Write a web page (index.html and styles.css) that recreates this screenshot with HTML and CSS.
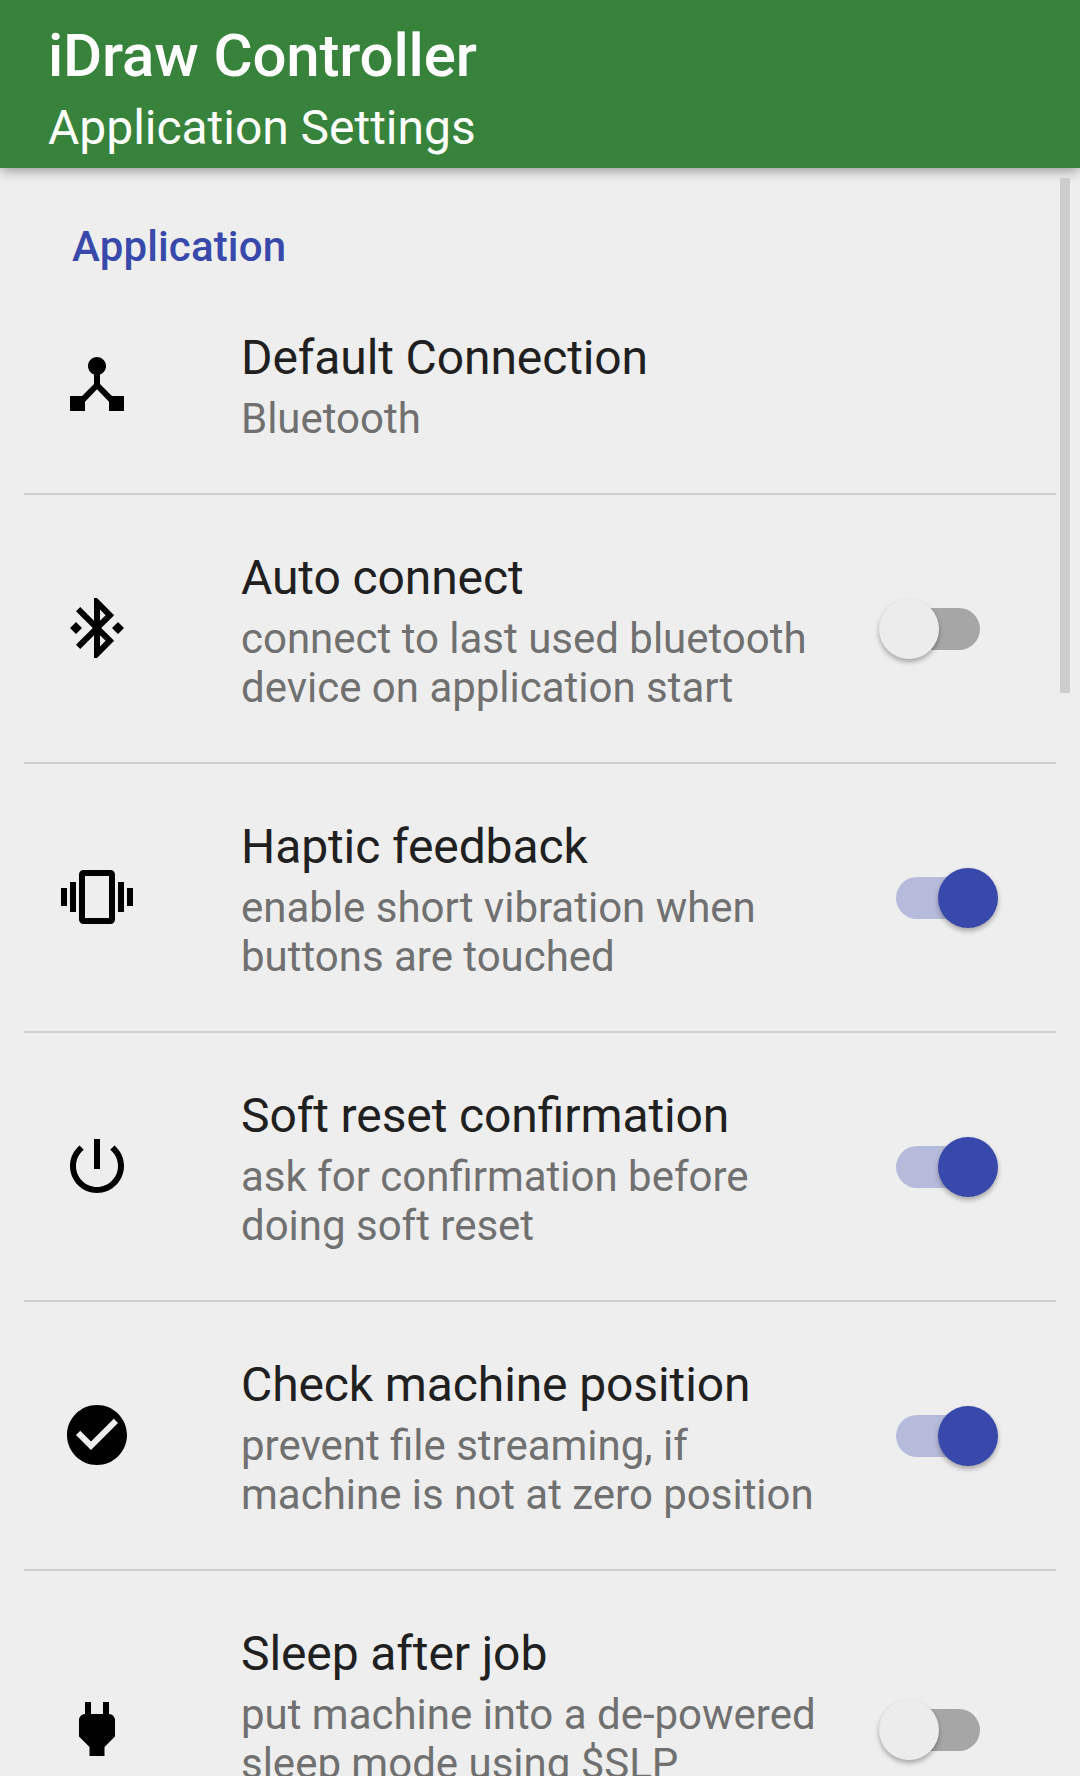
FILE: index.html
```html
<!DOCTYPE html>
<html lang="en">
<head>
<meta charset="utf-8">
<title>iDraw Controller</title>
<link rel="stylesheet" href="styles.css">
</head>
<body>
<header class="app-bar">
  <h1 class="app-title">iDraw Controller</h1>
  <p class="app-subtitle">Application Settings</p>
</header>
<main class="settings">
  <h2 class="category">Application</h2>
  <section class="row row-first">
    <svg class="icon" viewBox="0 0 24 24"><path d="M17 16l-4-4V8.820C14.160 8.400 15 7.300 15 6c0-1.660-1.340-3-3-3S9 4.340 9 6c0 1.300.840 2.400 2 2.820V12l-4 4H3v5h5v-3.050l4-4.200 4 4.200V21h5v-5h-4z"/></svg>
    <div class="text"><h3 class="title">Default Connection</h3><p class="summary">Bluetooth</p></div>
  </section>
  <section class="row">
    <svg class="icon" viewBox="0 0 24 24"><path d="M7 12l-2-2-2 2 2 2 2-2zm10.710-4.290L12 2h-1v7.590L6.410 5 5 6.410 10.590 12 5 17.590 6.410 19 11 14.410V22h1l5.710-5.710-4.300-4.290 4.300-4.290zM13 5.830l1.880 1.880L13 9.590V5.830zm1.880 10.460L13 18.170v-3.760l1.880 1.880zM19 10l-2 2 2 2 2-2-2-2z"/></svg>
    <div class="text"><h3 class="title">Auto connect</h3><p class="summary">connect to last used bluetooth<br>device on application start</p></div>
    <span class="switch"></span>
  </section>
  <section class="row">
    <svg class="icon" viewBox="0 0 24 24"><path d="M0 15h2V9H0v6zm3 2h2V7H3v10zm19-8v6h2V9h-2zm-3 8h2V7h-2v10zM16.500 3h-9C6.670 3 6 3.670 6 4.500v15c0 .830.670 1.500 1.500 1.500h9c.830 0 1.500-.670 1.500-1.500v-15c0-.830-.670-1.500-1.500-1.500zM16 19H8V5h8v14z"/></svg>
    <div class="text"><h3 class="title">Haptic feedback</h3><p class="summary">enable short vibration when<br>buttons are touched</p></div>
    <span class="switch on"></span>
  </section>
  <section class="row">
    <svg class="icon" viewBox="0 0 24 24"><path d="M13 3h-2v10h2V3zm4.830 2.170l-1.420 1.420C17.990 7.860 19 9.810 19 12c0 3.870-3.130 7-7 7s-7-3.130-7-7c0-2.190 1.010-4.140 2.580-5.420L6.170 5.170C4.230 6.820 3 9.260 3 12c0 4.970 4.030 9 9 9s9-4.030 9-9c0-2.740-1.230-5.180-3.170-6.830z"/></svg>
    <div class="text"><h3 class="title">Soft reset confirmation</h3><p class="summary">ask for confirmation before<br>doing soft reset</p></div>
    <span class="switch on"></span>
  </section>
  <section class="row">
    <svg class="icon" viewBox="0 0 24 24"><path d="M12 2C6.480 2 2 6.480 2 12s4.480 10 10 10 10-4.480 10-10S17.520 2 12 2zm-2 15l-5-5 1.410-1.410L10 14.170l7.590-7.590L19 8l-9 9z"/></svg>
    <div class="text"><h3 class="title">Check machine position</h3><p class="summary">prevent file streaming, if<br>machine is not at zero position</p></div>
    <span class="switch on"></span>
  </section>
  <section class="row row-tall">
    <svg class="icon" viewBox="0 0 24 24"><path d="M16.010 7L16 3h-2v4h-4V3H8v4h-.010C7 6.990 6 7.990 6 8.990v5.490L9.500 18v3h5v-3l3.500-3.510v-5.500c0-1-1-2-1.990-1.990z"/></svg>
    <div class="text"><h3 class="title">Sleep after job</h3><p class="summary">put machine into a de-powered<br>sleep mode using $SLP</p></div>
    <span class="switch"></span>
  </section>
</main>
<div class="scrollbar"></div>
</body>
</html>
```
FILE: styles.css
```css
* { box-sizing: border-box; }
html, body { height: 100%; }
body { margin: 0; position: relative; overflow: hidden; background: #eee; font-family: Roboto, sans-serif; display: flex; flex-direction: column; }
h1, h2, h3, p { margin: 0; }
.app-bar { position: relative; flex: none; height: 168px; padding: 20px 48px 0; background: #38833c; color: #fff; box-shadow: 0 4px 11px -1px rgba(0,0,0,.36); }
.app-title { font-size: 60px; line-height: 71px; font-weight: 500; letter-spacing: -.17px; }
.app-subtitle { margin-top: 1px; font-size: 48px; line-height: 71px; letter-spacing: -.03px; }
.settings { flex: 1; min-height: 0; overflow: hidden; padding: 0 24px; }
.category { height: 132px; padding: 54px 48px 0; font-size: 42px; line-height: 49px; font-weight: 500; letter-spacing: .15px; color: #3949ab; }
.row { display: flex; align-items: center; height: 269px; padding: 0 58px 1px 37px; border-top: 2px solid #d0d0d0; }
.row-first { height: 193px; padding-bottom: 25px; border-top: 0; }
.row-tall { height: 319px; }
.icon { flex: none; width: 72px; height: 72px; }
.text { flex: 1; padding: 5px 0 0 108px; white-space: nowrap; font-feature-settings: "liga" 1; }
.row-first .text { padding-top: 4px; }
.row-tall .text { min-height: 216px; padding-top: 4px; }
.title { font-size: 48px; line-height: 57px; font-weight: 400; letter-spacing: -.11px; color: #202020; }
.summary { font-size: 42px; line-height: 49px; letter-spacing: -.01px; color: #707070; padding-top: 8px; }
.switch { position: relative; flex: none; width: 120px; height: 72px; }
.switch::before { content: ""; position: absolute; left: 18px; top: 16px; width: 84px; height: 42px; border-radius: 21px; background: #a6a6a6; }
.switch::after { content: ""; position: absolute; left: 0.5px; top: 6.5px; width: 60px; height: 60px; border-radius: 50%; background: #ececec; box-shadow: 0 3px 5px rgba(0,0,0,.3); }
.switch.on::before { background: #b7bbdb; }
.switch.on::after { left: 59.5px; background: #3949ab; }
.scrollbar { position: absolute; right: 10px; top: 178px; width: 10px; height: 515px; background: #cdcdcd; }
```
